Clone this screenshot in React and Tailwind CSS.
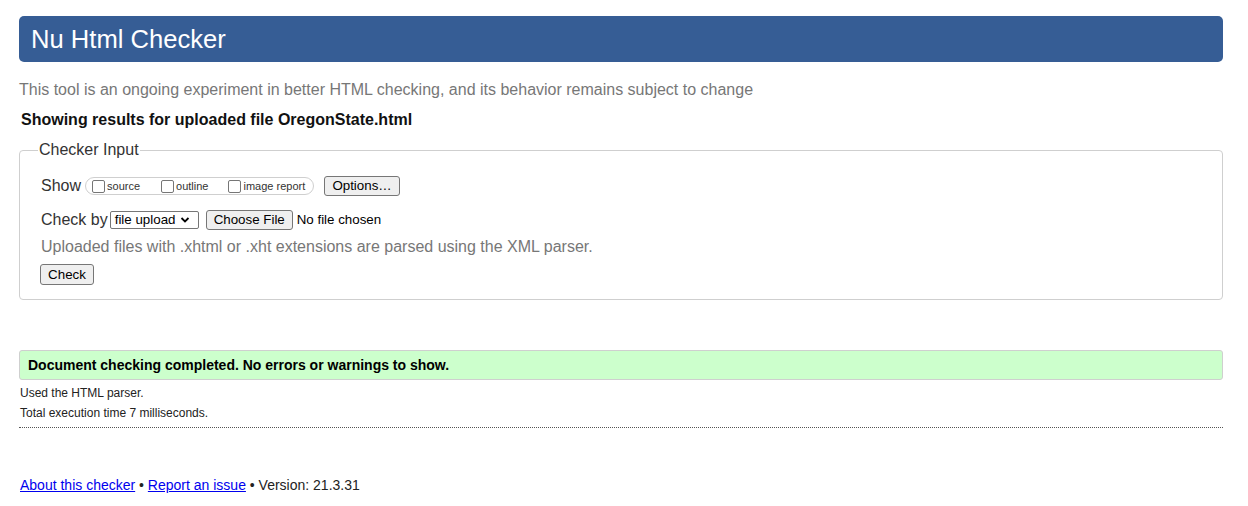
import React from "react";

function Box() {
  return <span className="inline-block w-[13px] h-[13px] border border-[#767676] rounded-[2px] bg-white mr-[2px] align-[-2px]" />;
}

function Btn({ children, className = "" }) {
  return (
    <span className={"inline-flex items-center justify-center bg-[#efefef] border border-[#767676] rounded-[3px] text-[13.33px] text-black leading-none " + className}>
      {children}
    </span>
  );
}

export default function App() {
  return (
    <div className="bg-white min-h-[506px] pt-[16px] pl-[19px] pr-[25px] text-[#333]" style={{ fontFamily: '"Liberation Sans", Arial, sans-serif' }}>
      <div className="h-[46px] rounded-[5px] bg-[#365d95] flex items-center pl-[12px] pt-[1px]">
        <h1 className="text-white text-[25.6px] leading-none">Nu Html Checker</h1>
      </div>
      <p className="mt-[19px] text-[16px] leading-[18px] text-[#777]">
        This tool is an ongoing experiment in better HTML checking, and its behavior remains subject to change
      </p>
      <p className="mt-[12px] ml-[2px] text-[16px] leading-[18px] font-bold text-[#111]">
        Showing results for uploaded file OregonState.html
      </p>
      <fieldset className="mt-[12px] border border-[#cfcfcf] rounded-[4px] px-[21px] pb-[13px]">
        <legend className="ml-[-3px] px-[1px] text-[16px] leading-[18px] text-[#333]">Checker Input</legend>
        <div className="mt-[17px] flex items-center h-[20px]">
          <span className="text-[16px] text-[#333]">Show</span>
          <span className="ml-[4px] h-[18px] w-[229px] border border-[#cfcfcf] rounded-full flex items-center pl-[6px] text-[11px] text-[#333]">
            <span className="flex items-center"><Box />source</span>
            <span className="flex items-center ml-[21px]"><Box />outline</span>
            <span className="flex items-center ml-[20px]"><Box />image report</span>
          </span>
          <Btn className="ml-[10px] h-[20px] w-[76px] text-[13.33px]">Options…</Btn>
        </div>
        <div className="mt-[14px] flex items-center h-[20px]">
          <span className="text-[16px] text-[#333]">Check by</span>
          <span className="ml-[2px] h-[18px] w-[89px] border border-[#767676] rounded-[2px] bg-white flex items-center pl-[4px] text-[13.33px] text-black">
            file upload
            <svg className="ml-[5px]" width="10" height="8" viewBox="0 0 10 8"><path d="M1.5 2l3.5 3.5L8.5 2" fill="none" stroke="#000" strokeWidth="1.8" /></svg>
          </span>
          <Btn className="ml-[7px] h-[20px] w-[87px]">Choose File</Btn>
          <span className="ml-[4px] text-[13.33px] text-black">No file chosen</span>
        </div>
        <p className="mt-[8px] text-[16px] leading-[18px] text-[#777]">
          Uploaded files with .xhtml or .xht extensions are parsed using the XML parser.
        </p>
        <div className="mt-[6px] -ml-[1px]">
          <Btn className="h-[21px] w-[54px]">Check</Btn>
        </div>
      </fieldset>
      <div className="mt-[50px] h-[30px] border border-[#cfcfcf] rounded-[3px] bg-[#ccffcc] flex items-center pl-[8px]">
        <span className="text-[14px] font-bold text-black">Document checking completed. No errors or warnings to show.</span>
      </div>
      <p className="mt-[3px] ml-[1px] text-[12px] leading-[20px] text-[#222]">Used the HTML parser.</p>
      <p className="ml-[1px] text-[12px] leading-[20px] text-[#222]">Total execution time 7 milliseconds.</p>
      <div className="mt-[4px] border-t border-dotted border-[#555]" />
      <p className="mt-[48px] ml-[1px] text-[14px] leading-[18px] text-[#222]">
        <a href="#" className="text-[#0000ee] underline">About this checker</a>
        {" • "}
        <a href="#" className="text-[#0000ee] underline">Report an issue</a>
        {" • Version: 21.3.31"}
      </p>
    </div>
  );
}
